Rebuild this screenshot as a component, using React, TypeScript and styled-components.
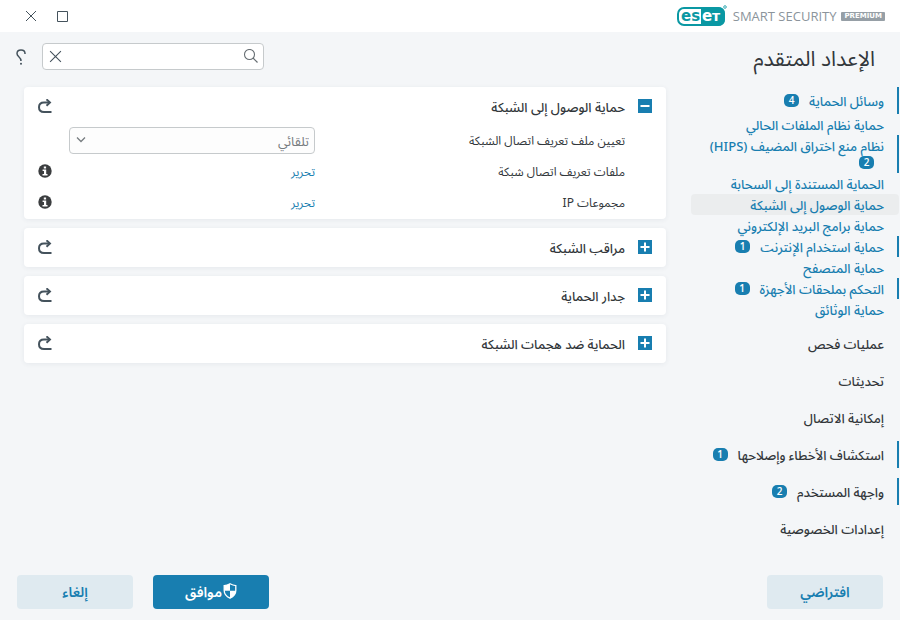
import React from "react";
import styled, { createGlobalStyle, css } from "styled-components";

const color = {
  page: "#f4f6f8",
  blue: "#187eb0",
  text: "#32373b",
  icon: "#44525c",
  teal: "#0a98a3",
};

const GlobalStyle = createGlobalStyle`
  * { box-sizing: border-box; }
  body { margin: 0; background: ${color.page}; }
  body, button, input, select {
    font-family: "Noto Sans Arabic", "Noto Sans", "DejaVu Sans", sans-serif;
  }
`;

const Window = styled.div`
  display: flex;
  flex-direction: column;
  min-height: 100vh;
  color: ${color.text};
  font-size: 13px;
`;

const TitleBar = styled.header`
  display: flex;
  align-items: center;
  justify-content: space-between;
  height: 32px;
  padding: 0 15px 0 21px;
  background: #fff;
`;

const Brand = styled.div`
  display: flex;
  align-items: center;
  direction: ltr;
`;

const ProductName = styled.span`
  margin: 0 5px 0 6px;
  color: #8b949b;
  font: 400 13px/20px "Open Sans", sans-serif;
`;

const Edition = styled.span`
  display: block;
  height: 9px;
  padding: 0 3px;
  border-radius: 1px;
  background: #969fa6;
  color: #fff;
  font: 700 7px/9px "DejaVu Sans", sans-serif;
`;

const WindowControls = styled.div`
  display: flex;
  gap: 12px;
`;

const IconButton = styled.button`
  display: grid;
  place-items: center;
  width: 20px;
  height: 20px;
  padding: 0;
  border: 0;
  background: none;
  color: ${color.icon};
  cursor: pointer;
`;

const Body = styled.div`
  display: grid;
  flex: 1;
  grid-template-columns: 208px 1fr;
  grid-template-rows: 55px 1fr auto;
  column-gap: 25px;
  padding-right: 1px;
`;

const PageTitle = styled.h1`
  align-self: center;
  margin: 0;
  padding: 0 24px 2px 0;
  font-size: 21px;
  font-weight: 400;
  line-height: 28px;
  white-space: nowrap;
`;

const SearchArea = styled.div`
  display: flex;
  align-items: center;
  justify-content: flex-end;
  gap: 14px;
  padding: 0 0 6px 14px;
`;

const SearchBox = styled.div`
  display: flex;
  align-items: center;
  width: 222px;
  height: 27px;
  padding: 0 2px;
  border: 1px solid #c6cacc;
  border-radius: 4px;
  background: #fff;
`;

const SearchInput = styled.input`
  flex: 1;
  min-width: 0;
  border: 0;
  outline: 0;
  background: none;
  font-size: 13px;
`;

const Nav = styled.nav`
  display: flex;
  flex-direction: column;
  gap: 10px;
`;

const NavGroup = styled.div`
  display: flex;
  flex-direction: column;
`;

const NavLink = styled.a<{ $sub?: boolean; $blue?: boolean; $marked?: boolean; $current?: boolean }>`
  padding: ${(p) => (p.$sub ? "4px 13px 0 0" : "7px 13px 3px 0")};
  border-right: 2px solid ${(p) => (p.$marked ? color.blue : "transparent")};
  color: ${(p) => (p.$sub || p.$blue ? color.blue : color.text)};
  font-size: 13px;
  font-weight: 500;
  line-height: 17px;
  text-decoration: none;
  white-space: nowrap;
  ${(p) =>
    p.$current &&
    css`
      border-radius: 4px;
      background: #ebedee;
    `}
`;

const Count = styled.span<{ $below?: boolean }>`
  display: ${(p) => (p.$below ? "block" : "inline-block")};
  width: 15px;
  height: 13px;
  margin: ${(p) => (p.$below ? "0 10px 4px" : "0 10px")};
  border-radius: 5px;
  background: ${color.blue};
  color: #fff;
  font: 600 10px/13px "Open Sans", sans-serif;
  text-align: center;
  vertical-align: 2px;
`;

const Panels = styled.main`
  display: flex;
  flex-direction: column;
  gap: 9px;
  padding-left: 24px;
`;

const Card = styled.section`
  border-radius: 4px;
  background: #fff;
  box-shadow: 0 1px 5px rgba(40, 60, 80, 0.07);
`;

const CardHeader = styled.div`
  display: flex;
  align-items: center;
  height: 39px;
  padding: 0 14px 2px;
`;

const Toggle = styled(IconButton)`
  width: 14px;
  height: 14px;
  background: ${color.blue};
  color: #fff;
`;

const CardTitle = styled.h2`
  flex: 1;
  margin: 0 13px 0 0;
  padding-top: 6px;
  font-size: 13px;
  font-weight: 500;
  line-height: 21px;
`;

const SmallButton = styled(IconButton)`
  width: 14px;
`;

const SettingRow = styled.div`
  display: grid;
  grid-template-columns: 1fr 246px 31px;
  align-items: center;
  height: 31px;
  padding: 0 41px 0 14px;
  font-size: 12px;
  line-height: 20px;
`;

const SelectBox = styled.div`
  position: relative;
  height: 29px;
  color: #777c80;

  svg {
    position: absolute;
    top: 9px;
    left: 7px;
    pointer-events: none;
  }
`;

const Select = styled.select`
  display: block;
  width: 100%;
  height: 27px;
  padding: 0 5px;
  border: 1px solid #c6cacc;
  border-radius: 4px;
  appearance: none;
  background: #fdfdfd;
  color: inherit;
  font-size: 13px;
`;

const EditLink = styled.a`
  color: ${color.blue};
  text-decoration: none;
`;

const InfoCell = styled.div`
  display: flex;
  justify-content: flex-end;
  padding-bottom: 3px;
`;

const Footer = styled.footer`
  display: flex;
  grid-column: 1 / -1;
  gap: 20px;
  padding: 0 16px 11px 17px;
`;

const ActionButton = styled.button<{ $primary?: boolean; $first?: boolean }>`
  display: flex;
  align-items: center;
  justify-content: center;
  gap: 1px;
  width: 116px;
  height: 34px;
  margin-left: ${(p) => (p.$first ? "auto" : "0")};
  padding: 0;
  border: 0;
  border-radius: 4px;
  background: ${(p) => (p.$primary ? color.blue : "#dfeaf0")};
  color: ${(p) => (p.$primary ? "#fff" : color.blue)};
  font-size: 14px;
  font-weight: 600;
  cursor: pointer;
`;

const Cross = ({ size }: { size: number }) => (
  <svg width={size} height={size} viewBox="0 0 12 12" fill="none" stroke="currentColor" aria-hidden>
    <path d="M1 1l10 10M11 1L1 11" strokeWidth="1" />
  </svg>
);

const Square = () => (
  <svg width="12" height="12" fill="none" stroke="currentColor" aria-hidden>
    <path d="M.5 1.500h10v10H.5z" />
  </svg>
);

const Magnifier = () => (
  <svg width="16" height="16" fill="none" stroke="#666d72" aria-hidden>
    <circle cx="6.500" cy="5.500" r="5" strokeWidth="1.1" />
    <path d="M10 9l4.500 4.500" strokeWidth="1.2" />
  </svg>
);

const Question = () => (
  <svg width="12" height="18" fill="none" stroke="currentColor" aria-hidden>
    <path d="M10 6V5.500Q10 2 6 2T2 5.500C2 9 6 8.500 6 13" strokeWidth="1.5" />
    <circle cx="6" cy="15.800" r="1" fill="currentColor" stroke="none" />
  </svg>
);

const Revert = () => (
  <svg width="14" height="14" fill="none" stroke="currentColor" aria-hidden>
    <path d="M11.500 3.500H6Q1 3.500 1 8.200T6 13h7.500" strokeWidth="2" />
    <path d="M8.500.3l3.500 3.200-3.500 3.200" strokeWidth="1.900" />
  </svg>
);

const Sign = ({ open }: { open?: boolean }) => (
  <svg width="14" height="14" stroke="currentColor" strokeWidth="2" aria-hidden>
    <path d={open ? "M2.500 7h9" : "M2.500 7h9M7 2.500v9"} />
  </svg>
);

const Info = () => (
  <svg width="14" height="14" aria-hidden>
    <circle cx="7" cy="7" r="6.700" fill="#3b3d3f" />
    <path d="M5.800 2.400h2.300v2H5.800zM4.600 5.600h3.600v4.500h1.300v1.300h-5v-1.300H6V6.900H4.600z" fill="#fff" />
  </svg>
);

const Chevron = () => (
  <svg width="10" height="8" fill="none" stroke="currentColor" aria-hidden>
    <path d="M1 1.500l4 4 4-4" strokeWidth="1.3" />
  </svg>
);

const Shield = () => (
  <svg width="14" height="18" aria-hidden>
    <path d="M7 .8q3 1.700 5.800 1.800v5q0 5-5.800 7.600Q1.200 12.600 1.200 7.600v-5Q4 2.500 7 .8z" fill="none" stroke="currentColor" strokeWidth="1.3" />
    <path d="M7 .8v7H1.200V2.600Q4 2.500 7 .8zM7 7.800h5.800q0 5-5.800 7.400z" fill="currentColor" />
  </svg>
);

const Logo = () => (
  <svg width="50" height="22" viewBox="0 0 50 22" role="img" aria-label="eset">
    <rect x="1" y="3" width="46" height="17" rx="6" fill="#fff" stroke={color.teal} strokeWidth="2" />
    <path d="M24 2h17q7 0 7 7v5q0 7-7 7H24z" fill={color.teal} />
    <g fontFamily="DejaVu Sans" fontWeight="700">
      <text x="4" y="16" fontSize="15" fill={color.teal}>es</text>
      <text x="25" y="16" fontSize="15" fill="#fff">e</text>
      <text x="35" y="16" fontSize="14" fill="#fff">т</text>
    </g>
    <circle cx="48" cy="2" r="1.300" fill="none" stroke={color.teal} strokeWidth=".8" />
  </svg>
);

type Item = { label: string; count?: number; sub?: boolean; blue?: boolean; current?: boolean; below?: boolean };

const groups: Item[][] = [
  [
    { label: "وسائل الحماية", count: 4, blue: true },
    { label: "حماية نظام الملفات الحالي", sub: true },
    { label: "نظام منع اختراق المضيف (HIPS)", count: 2, sub: true, below: true },
    { label: "الحماية المستندة إلى السحابة", sub: true },
    { label: "حماية الوصول إلى الشبكة", sub: true, current: true },
    { label: "حماية برامج البريد الإلكتروني", sub: true },
    { label: "حماية استخدام الإنترنت", count: 1, sub: true },
    { label: "حماية المتصفح", sub: true },
    { label: "التحكم بملحقات الأجهزة", count: 1, sub: true },
    { label: "حماية الوثائق", sub: true },
  ],
  [{ label: "عمليات فحص" }],
  [{ label: "تحديثات" }],
  [{ label: "إمكانية الاتصال" }],
  [{ label: "استكشاف الأخطاء وإصلاحها", count: 1 }],
  [{ label: "واجهة المستخدم", count: 2 }],
  [{ label: "إعدادات الخصوصية" }],
];

const Header = ({ title, open }: { title: string; open?: boolean }) => (
  <CardHeader>
    <Toggle aria-label={title} aria-expanded={!!open}>
      <Sign open={open} />
    </Toggle>
    <CardTitle>{title}</CardTitle>
    <SmallButton aria-label="إرجاع">
      <Revert />
    </SmallButton>
  </CardHeader>
);

const EditRow = ({ label }: { label: string }) => (
  <SettingRow>
    <span>{label}</span>
    <EditLink href="#edit">تحرير</EditLink>
    <InfoCell>
      <SmallButton aria-label="معلومات">
        <Info />
      </SmallButton>
    </InfoCell>
  </SettingRow>
);

export default function App() {
  return (
    <Window dir="rtl" lang="ar">
      <GlobalStyle />
      <TitleBar>
        <Brand>
          <Logo />
          <ProductName>SMART SECURITY</ProductName>
          <Edition>PREMIUM</Edition>
        </Brand>
        <WindowControls>
          <IconButton aria-label="تكبير">
            <Square />
          </IconButton>
          <IconButton aria-label="إغلاق">
            <Cross size={12} />
          </IconButton>
        </WindowControls>
      </TitleBar>
      <Body>
        <PageTitle>الإعداد المتقدم</PageTitle>
        <SearchArea>
          <SearchBox>
            <IconButton as="span">
              <Magnifier />
            </IconButton>
            <SearchInput type="text" aria-label="بحث" />
            <IconButton aria-label="مسح">
              <Cross size={13} />
            </IconButton>
          </SearchBox>
          <SmallButton aria-label="تعليمات">
            <Question />
          </SmallButton>
        </SearchArea>
        <Nav>
          {groups.map((items) => (
            <NavGroup key={items[0].label}>
              {items.map((item) => (
                <NavLink
                  key={item.label}
                  href="#section"
                  $sub={item.sub}
                  $blue={item.blue}
                  $marked={!!item.count}
                  $current={item.current}
                >
                  {item.label}
                  {item.count && <Count $below={item.below}>{item.count}</Count>}
                </NavLink>
              ))}
            </NavGroup>
          ))}
        </Nav>
        <Panels>
          <Card>
            <Header title="حماية الوصول إلى الشبكة" open />
            <SettingRow>
              <label htmlFor="profile">تعيين ملف تعريف اتصال الشبكة</label>
              <SelectBox>
                <Select id="profile">
                  <option>تلقائي</option>
                </Select>
                <Chevron />
              </SelectBox>
            </SettingRow>
            <EditRow label="ملفات تعريف اتصال شبكة" />
            <EditRow label="مجموعات IP" />
          </Card>
          <Card>
            <Header title="مراقب الشبكة" />
          </Card>
          <Card>
            <Header title="جدار الحماية" />
          </Card>
          <Card>
            <Header title="الحماية ضد هجمات الشبكة" />
          </Card>
        </Panels>
        <Footer>
          <ActionButton $first>افتراضي</ActionButton>
          <ActionButton $primary>
            <Shield />
            موافق
          </ActionButton>
          <ActionButton>إلغاء</ActionButton>
        </Footer>
      </Body>
    </Window>
  );
}
